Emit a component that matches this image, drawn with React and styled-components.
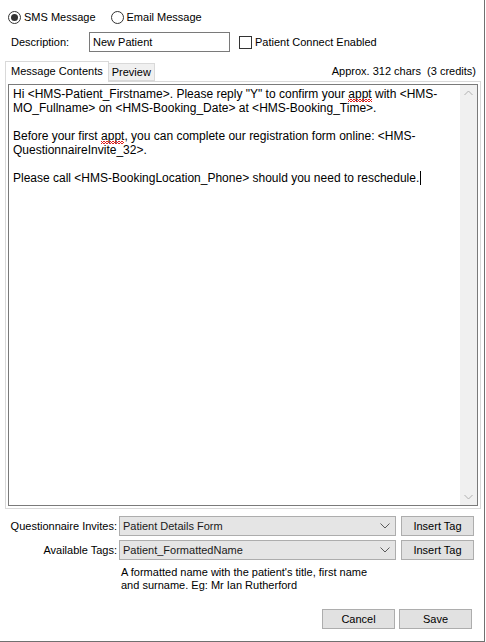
import React from "react";
import styled, { createGlobalStyle } from "styled-components";

const Global = createGlobalStyle`
  html, body { margin: 0; padding: 0; background: #ffffff; }
  body { font-family: "Liberation Sans", Arial, sans-serif; font-size: 11px; color: #000; }
`;

const Window = styled.div`
  box-sizing: border-box;
  width: 485px;
  height: 642px;
  background: #fff;
  border-right: 1px solid #707070;
  border-bottom: 1px solid #707070;
  display: flex;
  flex-direction: column;
`;

const RadioRow = styled.div`
  display: flex;
  align-items: center;
  height: 14px;
  margin: 10px 0 0 8px;
  gap: 15px;
`;

const RadioItem = styled.label`
  display: flex;
  align-items: center;
  gap: 3px;
  font-size: 11px;
`;

const RadioCircle = styled.span`
  box-sizing: border-box;
  width: 13px;
  height: 13px;
  border-radius: 50%;
  border: 1px solid #333;
  background: #fff;
  display: flex;
  align-items: center;
  justify-content: center;
  &::after {
    content: "";
    width: 7px;
    height: 7px;
    border-radius: 50%;
    background: ${(p) => (p.$checked ? "#333" : "transparent")};
  }
`;

const FieldRow = styled.div`
  display: flex;
  align-items: center;
  height: 20px;
  margin: 8px 0 0 11px;
`;

const FieldLabel = styled.span`
  width: 78px;
  font-size: 11px;
`;

const TextInput = styled.div`
  box-sizing: border-box;
  width: 141px;
  height: 20px;
  border: 1px solid #7a7a7a;
  padding: 0 3px;
  display: flex;
  align-items: center;
  font-size: 11px;
`;

const CheckItem = styled.label`
  display: flex;
  align-items: center;
  gap: 3px;
  margin-left: 9px;
  font-size: 11px;
`;

const CheckBox = styled.span`
  box-sizing: border-box;
  width: 13px;
  height: 13px;
  border: 1px solid #333;
  background: #fff;
`;

const TabStrip = styled.div`
  display: flex;
  align-items: flex-end;
  height: 20px;
  margin: 9px 5px 0 5px;
  position: relative;
  z-index: 1;
`;

const Tab = styled.div`
  box-sizing: border-box;
  height: ${(p) => (p.$active ? "21px" : "18px")};
  margin-bottom: ${(p) => (p.$active ? "-1px" : "0")};
  padding: 0 ${(p) => (p.$active ? "5px" : "3px")};
  padding-bottom: ${(p) => (p.$active ? "2px" : "0")};
  border: 1px solid #d9d9d9;
  border-bottom: ${(p) => (p.$active ? "none" : "1px solid #d9d9d9")};
  border-left: ${(p) => (p.$active ? "1px solid #d9d9d9" : "none")};
  background: ${(p) => (p.$active ? "#fff" : "#f0f0f0")};
  display: flex;
  align-items: center;
  font-size: 11px;
`;

const TabInfo = styled.div`
  margin-left: auto;
  margin-right: 3px;
  align-self: center;
  font-size: 11px;
  white-space: pre;
`;

const TabPanel = styled.div`
  box-sizing: border-box;
  width: 476px;
  height: 428px;
  margin-left: 5px;
  border: 1px solid #d9d9d9;
  padding: 2px;
  display: flex;
`;

const Editor = styled.div`
  box-sizing: border-box;
  flex: 1;
  border: 1px solid #7a7a7a;
  display: flex;
`;

const EditorText = styled.div`
  flex: 1;
  padding: 2px 4px;
  font-size: 12px;
  line-height: 14px;
  white-space: pre;
  display: flex;
  flex-direction: column;
`;

const Line = styled.div`
  height: 14px;
  margin-bottom: ${(p) => (p.$gap ? "14px" : "0")};
`;

const Misspelt = styled.span`
  position: relative;
  &::after {
    content: "";
    position: absolute;
    left: 0;
    right: 0;
    bottom: -1px;
    height: 3px;
    background:
      linear-gradient(135deg, transparent 45%, #e02020 45%, #e02020 60%, transparent 60%) 0 0 / 3px 3px repeat-x,
      linear-gradient(45deg, transparent 45%, #e02020 45%, #e02020 60%, transparent 60%) 0 0 / 3px 3px repeat-x;
  }
`;

const Caret = styled.span`
  display: inline-block;
  width: 1px;
  height: 14px;
  background: #000;
  vertical-align: -3px;
  margin-left: 1px;
`;

const ScrollBar = styled.div`
  width: 17px;
  background: #f0f0f0;
  display: flex;
  flex-direction: column;
  justify-content: space-between;
  align-items: center;
  padding: 5px 0;
`;

const TagRow = styled.div`
  display: flex;
  align-items: center;
  height: 20px;
  margin-top: ${(p) => p.$top}px;
`;

const TagLabel = styled.span`
  width: 117px;
  text-align: right;
  font-size: 11px;
`;

const Select = styled.div`
  box-sizing: border-box;
  width: 277px;
  height: 20px;
  margin-left: 2px;
  border: 1px solid #adadad;
  background: #e5e5e5;
  display: flex;
  align-items: center;
  padding: 0 5px 0 3px;
  font-size: 11px;
  color: #1a1a1a;
  & > span {
    flex: 1;
  }
`;

const Button = styled.div`
  box-sizing: border-box;
  width: 73px;
  height: 20px;
  margin-left: ${(p) => p.$ml ?? 5}px;
  border: 1px solid #adadad;
  background: #e1e1e1;
  display: flex;
  align-items: center;
  justify-content: center;
  font-size: 11px;
`;

const HelpText = styled.div`
  margin: 6px 0 0 121px;
  font-size: 11px;
  line-height: 13px;
`;

const Footer = styled.div`
  display: flex;
  justify-content: flex-end;
  margin: auto 12px 12px 0;
`;

const Chevron = ({ up }) => (
  <svg width="9" height="6" viewBox="0 0 9 6">
    <polyline
      points={up ? "0.5,5 4.5,1 8.5,5" : "0.5,1 4.5,5 8.5,1"}
      fill="none"
      stroke="#b0b0b0"
      strokeWidth="1"
    />
  </svg>
);

const DropArrow = () => (
  <svg width="10" height="6" viewBox="0 0 10 6">
    <polyline points="0.5,0.5 5,5 9.5,0.5" fill="none" stroke="#5a5a5a" strokeWidth="1" />
  </svg>
);

export default function App() {
  return (
    <>
      <Global />
      <Window>
        <RadioRow>
          <RadioItem>
            <RadioCircle $checked />
            SMS Message
          </RadioItem>
          <RadioItem>
            <RadioCircle />
            Email Message
          </RadioItem>
        </RadioRow>

        <FieldRow>
          <FieldLabel>Description:</FieldLabel>
          <TextInput>New Patient</TextInput>
          <CheckItem>
            <CheckBox />
            Patient Connect Enabled
          </CheckItem>
        </FieldRow>

        <TabStrip>
          <Tab $active>Message Contents</Tab>
          <Tab>Preview</Tab>
          <TabInfo>Approx. 312 chars  (3 credits)</TabInfo>
        </TabStrip>

        <TabPanel>
          <Editor>
            <EditorText>
              <Line>
                {'Hi <HMS-Patient_Firstname>. Please reply "Y" to confirm your '}
                <Misspelt>appt</Misspelt>
                {" with <HMS-"}
              </Line>
              <Line $gap>{"MO_Fullname> on <HMS-Booking_Date> at <HMS-Booking_Time>."}</Line>
              <Line>
                {"Before your first "}
                <Misspelt>appt</Misspelt>
                {", you can complete our registration form online: <HMS-"}
              </Line>
              <Line $gap>{"QuestionnaireInvite_32>."}</Line>
              <Line>
                {"Please call <HMS-BookingLocation_Phone> should you need to reschedule."}
                <Caret />
              </Line>
            </EditorText>
            <ScrollBar>
              <Chevron up />
              <Chevron />
            </ScrollBar>
          </Editor>
        </TabPanel>

        <TagRow $top={7}>
          <TagLabel>Questionnaire Invites:</TagLabel>
          <Select>
            <span>Patient Details Form</span>
            <DropArrow />
          </Select>
          <Button>Insert Tag</Button>
        </TagRow>
        <TagRow $top={4}>
          <TagLabel>Available Tags:</TagLabel>
          <Select>
            <span>Patient_FormattedName</span>
            <DropArrow />
          </Select>
          <Button>Insert Tag</Button>
        </TagRow>

        <HelpText>
          A formatted name with the patient's title, first name
          <br />
          and surname. Eg: Mr Ian Rutherford
        </HelpText>

        <Footer>
          <Button $ml={0}>Cancel</Button>
          <Button $ml={4}>Save</Button>
        </Footer>
      </Window>
    </>
  );
}
